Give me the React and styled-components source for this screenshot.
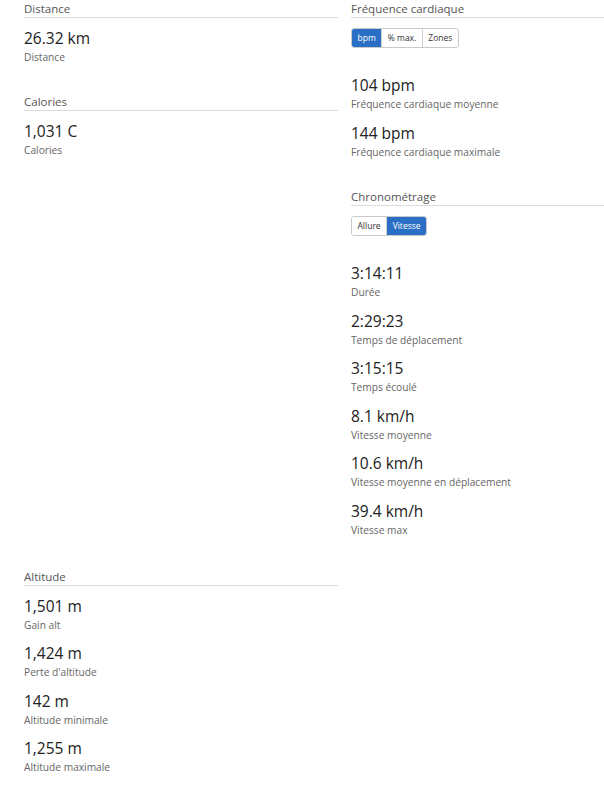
import React from "react";
import styled, { createGlobalStyle } from "styled-components";

const Global = createGlobalStyle`
  html, body { margin: 0; padding: 0; background: #fff; }
  body { font-family: "Open Sans", "Noto Sans", sans-serif; color: #222; }
`;

const Page = styled.div`
  width: 604px;
  overflow: hidden;
  padding-left: 24px;
  box-sizing: border-box;
`;

const Columns = styled.div`
  display: flex;
  gap: 13px;
  align-items: flex-start;
`;

const Column = styled.div`
  display: flex;
  flex-direction: column;
  gap: ${(p) => p.$gap}px;
  width: ${(p) => p.$w}px;
  flex-shrink: 0;
`;

const Section = styled.section`
  display: flex;
  flex-direction: column;
`;

const Title = styled.h3`
  margin: 0;
  font-size: 11.5px;
  font-weight: 400;
  line-height: 17px;
  color: #555;
  border-bottom: 1px solid #dcdcdc;
`;

const Body = styled.div`
  display: flex;
  flex-direction: column;
  padding-top: 10px;
`;

const Toggle = styled.div`
  display: flex;
  align-self: flex-start;
  border: 1px solid #c9c9c9;
  border-radius: 3px;
  overflow: hidden;
  margin-bottom: 27px;
`;

const ToggleBtn = styled.span`
  height: 18px;
  line-height: 18px;
  padding: 0 5.5px;
  font-size: 8.5px;
  color: ${(p) => (p.$active ? "#fff" : "#333")};
  background: ${(p) => (p.$active ? "#2a6fc6" : "#fff")};
  & + & {
    border-left: 1px solid ${(p) => (p.$active ? "#2a6fc6" : "#d0d0d0")};
  }
`;

const Items = styled.div`
  display: flex;
  flex-direction: column;
  gap: 10.6px;
`;

const Item = styled.div`
  display: flex;
  flex-direction: column;
`;

const Value = styled.div`
  font-size: 15.5px;
  line-height: 20px;
  color: #222;
`;

const Label = styled.div`
  padding-top: 1px;
  font-size: 10.2px;
  line-height: 16px;
  color: #666;
`;

const Bottom = styled.div`
  margin-top: 29.5px;
  width: 314px;
`;

function Stat({ value, label }) {
  return (
    <Item>
      <Value>{value}</Value>
      <Label>{label}</Label>
    </Item>
  );
}

function Block({ title, toggle, stats }) {
  return (
    <Section>
      <Title>{title}</Title>
      <Body>
        {toggle && (
          <Toggle>
            {toggle.map((t) => (
              <ToggleBtn key={t.label} $active={t.active}>
                {t.label}
              </ToggleBtn>
            ))}
          </Toggle>
        )}
        <Items>
          {stats.map((s) => (
            <Stat key={s[1]} value={s[0]} label={s[1]} />
          ))}
        </Items>
      </Body>
    </Section>
  );
}

export default function App() {
  return (
    <>
      <Global />
      <Page>
        <Columns>
          <Column $w={314} $gap={28}>
            <Block title="Distance" stats={[["26.32 km", "Distance"]]} />
            <Block title="Calories" stats={[["1,031 C", "Calories"]]} />
          </Column>
          <Column $w={260} $gap={28.5}>
            <Block
              title="Fréquence cardiaque"
              toggle={[
                { label: "bpm", active: true },
                { label: "% max." },
                { label: "Zones" },
              ]}
              stats={[
                ["104 bpm", "Fréquence cardiaque moyenne"],
                ["144 bpm", "Fréquence cardiaque maximale"],
              ]}
            />
            <Block
              title="Chronométrage"
              toggle={[
                { label: "Allure" },
                { label: "Vitesse", active: true },
              ]}
              stats={[
                ["3:14:11", "Durée"],
                ["2:29:23", "Temps de déplacement"],
                ["3:15:15", "Temps écoulé"],
                ["8.1 km/h", "Vitesse moyenne"],
                ["10.6 km/h", "Vitesse moyenne en déplacement"],
                ["39.4 km/h", "Vitesse max"],
              ]}
            />
          </Column>
        </Columns>
        <Bottom>
          <Block
            title="Altitude"
            stats={[
              ["1,501 m", "Gain alt"],
              ["1,424 m", "Perte d'altitude"],
              ["142 m", "Altitude minimale"],
              ["1,255 m", "Altitude maximale"],
            ]}
          />
        </Bottom>
      </Page>
    </>
  );
}
